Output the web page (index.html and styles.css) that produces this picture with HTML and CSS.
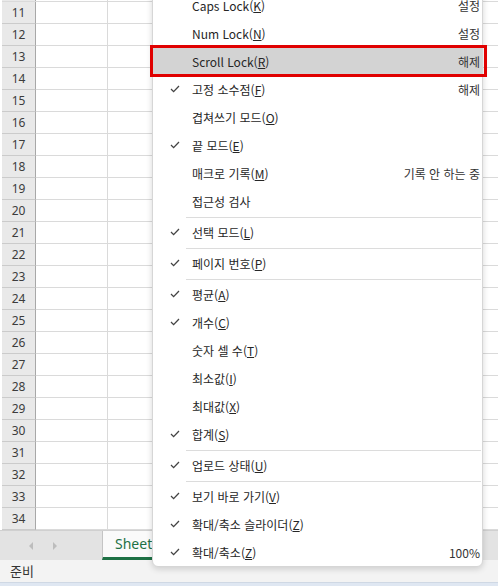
FILE: index.html
```html
<!DOCTYPE html>
<html lang="ko">
<head>
    <meta charset="UTF-8">
    <meta name="viewport" content="width=device-width, initial-scale=1.0">
    <title>상태 표시줄 사용자 지정</title>
    <link rel="stylesheet" href="styles.css">
</head>
<body>
    <div class="app">
        <div class="sheet" id="sheet"></div>

        <div class="tabs">
            <div class="tab-nav">
                <span class="nav-arrow left"></span>
                <span class="nav-arrow right"></span>
            </div>
            <div class="tab">Sheet1</div>
        </div>

        <div class="status">준비</div>
        <div class="taskbar"></div>
    </div>

    <!-- 상태 표시줄 사용자 지정 메뉴 -->
    <div class="menu">
        <div class="item"><span class="label">Caps Lock(<u>K</u>)</span><span class="value">설정</span></div>
        <div class="item"><span class="label">Num Lock(<u>N</u>)</span><span class="value">설정</span></div>
        <div class="item hover"><span class="label">Scroll Lock(<u>R</u>)</span><span class="value">해제</span></div>
        <div class="item checked"><span class="label">고정 소수점(<u>F</u>)</span><span class="value">해제</span></div>
        <div class="item"><span class="label">겹쳐쓰기 모드(<u>O</u>)</span></div>
        <div class="item checked"><span class="label">끝 모드(<u>E</u>)</span></div>
        <div class="item"><span class="label">매크로 기록(<u>M</u>)</span><span class="value">기록 안 하는 중</span></div>
        <div class="item"><span class="label">접근성 검사</span></div>
        <div class="sep"></div>
        <div class="item checked"><span class="label">선택 모드(<u>L</u>)</span></div>
        <div class="sep"></div>
        <div class="item checked"><span class="label">페이지 번호(<u>P</u>)</span></div>
        <div class="sep"></div>
        <div class="item checked"><span class="label">평균(<u>A</u>)</span></div>
        <div class="item checked"><span class="label">개수(<u>C</u>)</span></div>
        <div class="item"><span class="label">숫자 셀 수(<u>T</u>)</span></div>
        <div class="item"><span class="label">최소값(<u>I</u>)</span></div>
        <div class="item"><span class="label">최대값(<u>X</u>)</span></div>
        <div class="item checked"><span class="label">합계(<u>S</u>)</span></div>
        <div class="sep"></div>
        <div class="item checked"><span class="label">업로드 상태(<u>U</u>)</span></div>
        <div class="sep"></div>
        <div class="item checked"><span class="label">보기 바로 가기(<u>V</u>)</span></div>
        <div class="item checked"><span class="label">확대/축소 슬라이더(<u>Z</u>)</span></div>
        <div class="item checked"><span class="label">확대/축소(<u>Z</u>)</span><span class="value">100%</span></div>
    </div>

    <!-- 강조 표시 -->
    <div class="mark"></div>

    <script>
        // 행 머리글과 셀 만들기 (맨 위 줄은 10행의 아래 끝만 보임)
        var sheet = document.getElementById('sheet');
        for (var r = 10; r <= 34; r++) {
            var row = document.createElement('div');
            row.className = r === 10 ? 'row cut' : 'row';
            var head = document.createElement('div');
            head.className = 'rh';
            if (r > 10) head.textContent = r;
            row.appendChild(head);
            for (var c = 0; c < 7; c++) {
                var cell = document.createElement('div');
                cell.className = 'cell';
                row.appendChild(cell);
            }
            sheet.appendChild(row);
        }

        // 체크 표시 넣기
        var checks = document.querySelectorAll('.item.checked');
        for (var i = 0; i < checks.length; i++) {
            checks[i].insertAdjacentHTML('afterbegin',
                '<svg class="check" width="10" height="8" viewBox="0 0 10 8"><polyline points="1,4 3.6,6.6 9,1" fill="none" stroke="#444" stroke-width="1.3"/></svg>');
        }
    </script>
</body>
</html>
```

FILE: styles.css
```css
/* 기본 */
body {
    margin: 0;
    overflow: hidden;
    background-color: #fff;
    font-family: "Noto Sans CJK KR", "Noto Sans", sans-serif;
    color: #222;
}

.app {
    height: 586px;
    display: flex;
    flex-direction: column;
}

/* 시트 */
.sheet {
    height: 530px;
    overflow: hidden;
    padding-left: 2px;
}

.row {
    display: flex;
    height: 21px;
    border-bottom: 1px solid #dadada;
}

.row.cut {
    height: 1px;
    overflow: hidden;
}

.rh {
    width: 33px;
    flex: none;
    background-color: #e9e9e9;
    border-right: 1px solid #a8a8a8;
    border-bottom: 1px solid #cbcbcb;
    margin-bottom: -1px;
    font-size: 12px;
    line-height: 21px;
    text-align: center;
    color: #3c3c3c;
    font-family: "Noto Sans", sans-serif;
}

.cell {
    width: 71px;
    flex: none;
    border-right: 1px solid #dadada;
}

/* 시트 탭 */
.tabs {
    height: 30px;
    display: flex;
    background-color: #e3e3e3;
    border-top: 1px solid #d0d0d0;
    box-sizing: border-box;
}

.tab-nav {
    width: 102px;
    display: flex;
    align-items: center;
    gap: 20px;
    padding-left: 29px;
    box-sizing: border-box;
}

.nav-arrow {
    width: 0;
    height: 0;
    border-top: 4px solid transparent;
    border-bottom: 4px solid transparent;
}

.nav-arrow.left {
    border-right: 4px solid #bdbdbd;
}

.nav-arrow.right {
    border-left: 4px solid #bdbdbd;
}

.tab {
    width: 82px;
    background-color: #fafafa;
    border-left: 1px solid #c4c4c4;
    border-bottom: 3px solid #1e7145;
    color: #1e7145;
    font-family: "Noto Sans", sans-serif;
    font-size: 14px;
    line-height: 26px;
    padding-left: 12px;
    box-sizing: border-box;
}

/* 상태 표시줄 */
.status {
    height: 22px;
    background-color: #f3f3f3;
    font-size: 13px;
    line-height: 22px;
    padding-left: 10px;
    color: #333;
}

.taskbar {
    flex: 1;
    background-color: #dfe7f2;
    border-top: 1px solid #cfd8e4;
}

/* 메뉴 */
.menu {
    position: absolute;
    left: 152px;
    top: -10px;
    width: 331px;
    box-sizing: border-box;
    background-color: #fff;
    border: 1px solid #d6d6d6;
    border-radius: 6px;
    box-shadow: 0 2px 6px rgba(0, 0, 0, 0.16);
}

.item {
    position: relative;
    height: 28px;
    display: flex;
    align-items: center;
    justify-content: space-between;
    padding-left: 39px;
    padding-right: 2px;
    font-size: 12px;
    color: #262626;
}

.item u {
    text-underline-offset: 1px;
}

.item.hover {
    background-color: #d3d3d3;
}

.check {
    position: absolute;
    left: 17px;
    top: 10px;
}

.value {
    color: #333;
}

.sep {
    height: 1px;
    margin: 2px 1px 0 33px;
    background-color: #dcdcdc;
}

/* 빨간 강조 상자 */
.mark {
    position: absolute;
    left: 150px;
    top: 45px;
    width: 331px;
    height: 26px;
    border: 3px solid #e00000;
}
```
